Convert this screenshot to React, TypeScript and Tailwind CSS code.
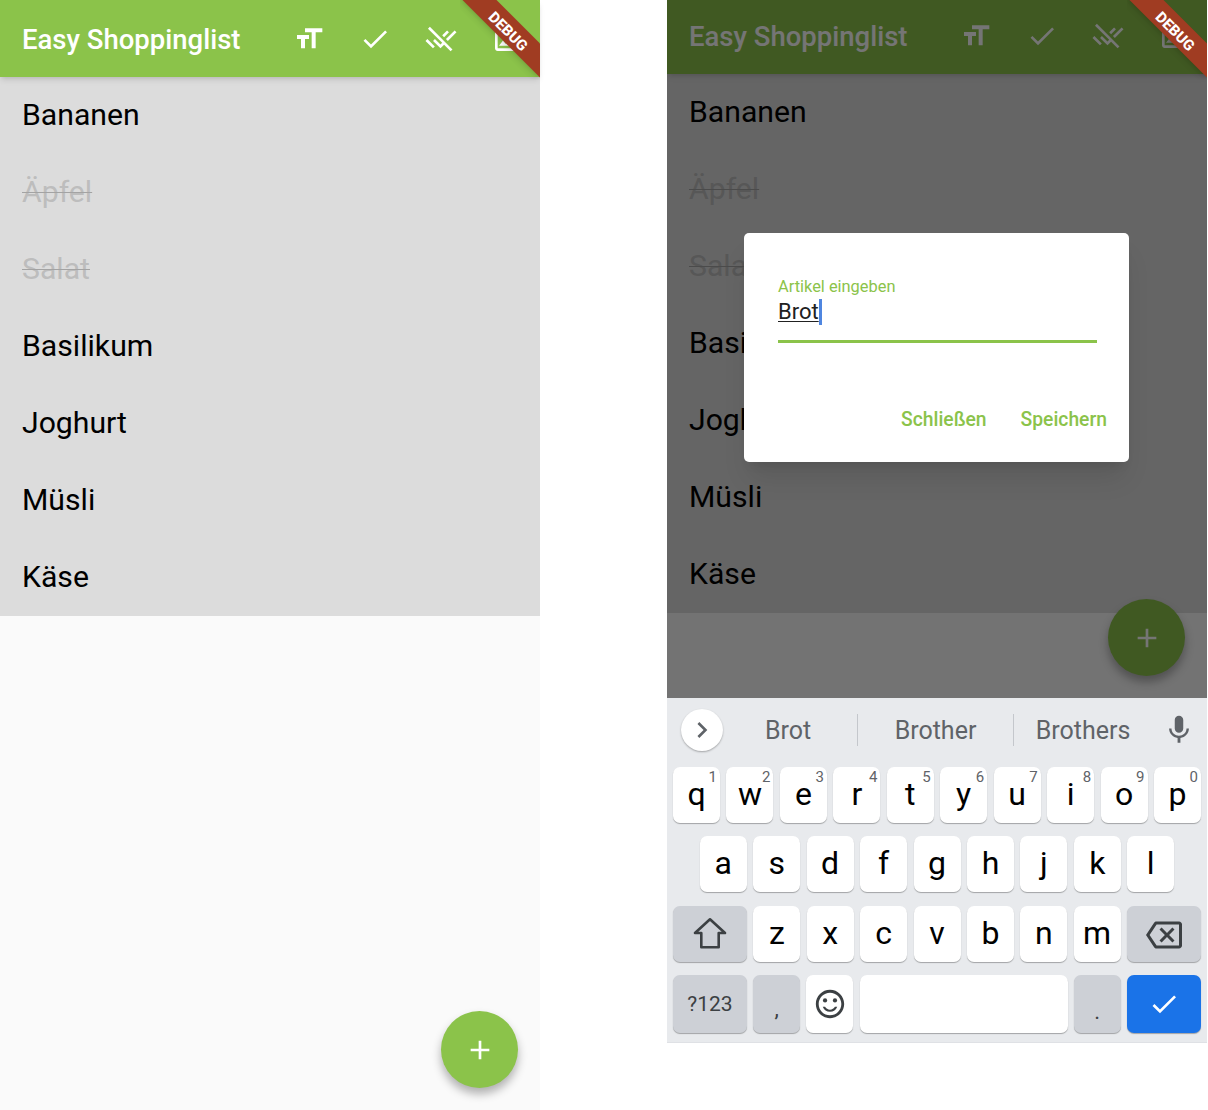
import { MdFormatSize, MdDone, MdRemoveDone, MdAdd, MdKeyboardArrowRight, MdMic, MdCheck, MdOutlineBackspace, MdOutlineSentimentSatisfied, MdOutlineImage } from 'react-icons/md';
import type { ReactNode } from 'react';

const items = [
    { name: 'Bananen', done: false },
    { name: 'Äpfel', done: true },
    { name: 'Salat', done: true },
    { name: 'Basilikum', done: false },
    { name: 'Joghurt', done: false },
    { name: 'Müsli', done: false },
    { name: 'Käse', done: false },
];

const rowOne = [['q', '1'], ['w', '2'], ['e', '3'], ['r', '4'], ['t', '5'], ['y', '6'], ['u', '7'], ['i', '8'], ['o', '9'], ['p', '0']];
const rowTwo = ['a', 's', 'd', 'f', 'g', 'h', 'j', 'k', 'l'];
const rowThree = ['z', 'x', 'c', 'v', 'b', 'n', 'm'];

function DebugBanner() {
    return (
        <div className="absolute z-30 top-0 right-0 w-[80px] h-[80px] overflow-hidden">
            <div className="absolute top-[18px] -right-[25.5px] w-[113px] h-[24px] rotate-45 bg-[#a03c22] shadow-md flex items-center justify-center pt-[5px] text-white text-[15px] leading-none font-extrabold">
                DEBUG
            </div>
        </div>
    );
}

function AppBar({ size }: { size: string }) {
    return (
        <div className={`${size} relative z-10 bg-[#8bc34a] shadow-md text-white flex items-center pl-[22px] shrink-0`}>
            <span className="text-[27.5px] pt-[3px] font-medium w-[271px] whitespace-nowrap">Easy Shoppinglist</span>
            <div className="flex items-center gap-[34px]">
                <MdFormatSize className="w-[32px] h-[32px]" />
                <MdDone className="w-[32px] h-[32px]" />
                <MdRemoveDone className="w-[32px] h-[32px]" />
                <MdOutlineImage className="w-[32px] h-[32px]" />
            </div>
        </div>
    );
}

function ShoppingList() {
    return (
        <div className="bg-[#dcdcdc]">
            {items.map((item) => (
                <div key={item.name} className="h-[77px] flex items-center pl-[22px] pb-[2px] text-[30.2px]">
                    <span className={item.done ? 'line-through decoration-1 decoration-[#a3a3a3] text-[#bdbdbd]' : 'text-black'}>{item.name}</span>
                </div>
            ))}
        </div>
    );
}

function Fab() {
    return (
        <div className="absolute bottom-[22px] right-[22px] w-[77px] h-[77px] rounded-full bg-[#8bc34a] shadow-[0_6px_10px_rgba(0,0,0,0.3)] flex items-center justify-center text-white">
            <MdAdd className="w-[32px] h-[32px]" />
        </div>
    );
}

function Key({ children, sup, width = 'w-[47px]', tone = 'bg-white' }: { children?: ReactNode; sup?: string; width?: string; tone?: string }) {
    return (
        <div className={`${width} ${tone} relative h-full rounded-[7px] shadow-[0_1px_1px_rgba(0,0,0,0.3)] flex items-center justify-center pb-[2px] text-[32px] text-black shrink-0`}>
            {sup && <span className="absolute top-[1px] right-[3px] text-[15px] leading-[18px] text-[#5f6368]">{sup}</span>}
            {children}
        </div>
    );
}

function Keyboard() {
    return (
        <div className="h-[345px] bg-[#e8eaed] border-b border-[#dfe1e5] flex flex-col px-[6px]">
            <div className="h-[62px] mt-[1px] flex items-center text-[25px] text-[#5f6368] shrink-0">
                <div className="w-[42px] h-[42px] ml-[8px] rounded-full bg-white shadow-[0_1px_2px_rgba(0,0,0,0.3)] flex items-center justify-center shrink-0">
                    <MdKeyboardArrowRight className="w-[32px] h-[32px]" />
                </div>
                <div className="w-[130px] mr-[4px] pt-[1px] text-center">Brot</div>
                <div className="w-px h-[32px] bg-[#c4c7cc]" />
                <div className="w-[155px] pt-[1px] text-center">Brother</div>
                <div className="w-px h-[32px] bg-[#c4c7cc]" />
                <div className="w-[138px] pt-[1px] text-center">Brothers</div>
                <MdMic className="w-[34px] h-[34px] ml-[10px]" />
            </div>
            <div className="h-[56px] mt-[6px] flex gap-[6.44px] shrink-0">
                {rowOne.map(([k, n]) => (
                    <Key key={k} sup={n}>{k}</Key>
                ))}
            </div>
            <div className="h-[56px] mt-[13px] flex gap-[6.44px] justify-center shrink-0">
                {rowTwo.map((k) => (
                    <Key key={k}>{k}</Key>
                ))}
            </div>
            <div className="h-[56px] mt-[14px] flex gap-[6.375px] shrink-0">
                <Key width="w-[74px]" tone="bg-[#cdd0d6]">
                    <svg viewBox="0 0 36 36" className="w-[36px] h-[36px] mt-[2px]" fill="none" stroke="#3c4043" strokeWidth="2.6" strokeLinejoin="round">
                        <path d="M18 3.3 33 17h-6.3v14.3H9.300V17H3z" />
                    </svg>
                </Key>
                {rowThree.map((k) => (
                    <Key key={k}>{k}</Key>
                ))}
                <Key width="w-[74px]" tone="bg-[#cdd0d6]">
                    <MdOutlineBackspace className="w-[36px] h-[36px] mt-[4px] text-[#3c4043]" />
                </Key>
            </div>
            <div className="h-[58px] mt-[13px] flex gap-[6.2px] shrink-0">
                <Key width="w-[74px]" tone="bg-[#cdd0d6]">
                    <span className="text-[21px] mt-[4px] text-[#3c4043]">?123</span>
                </Key>
                <Key tone="bg-[#cdd0d6]">
                    <span className="text-[22px] mt-[10px] text-[#3c4043]">,</span>
                </Key>
                <Key>
                    <MdOutlineSentimentSatisfied className="w-[34px] h-[34px] mt-[2px] text-[#3c4043]" />
                </Key>
                <Key width="w-[208px]" />
                <Key tone="bg-[#cdd0d6]">
                    <span className="text-[22px] mt-[16px] text-[#3c4043]">.</span>
                </Key>
                <Key width="w-[74px]" tone="bg-[#1a73e8]">
                    <MdCheck className="w-[32px] h-[32px] mt-[2px] text-white" />
                </Key>
            </div>
        </div>
    );
}

function Dialog() {
    return (
        <div className="w-[385px] h-[229px] mb-[3px] mr-[1px] bg-white rounded-[5px] shadow-xl flex flex-col">
            <div className="pl-[34px] pr-[32px] pt-[44px]">
                <div className="text-[16.4px] leading-[20px] text-[#8bc34a]">Artikel eingeben</div>
                <div className="h-[30px] flex items-center text-[22px] leading-[26px] text-[#212121]">
                    <span className="underline underline-offset-2 decoration-1">Brot</span>
                    <span className="w-[3px] h-[26px] bg-[#4f86e0]" />
                </div>
                <div className="h-[3px] mt-[13px] bg-[#8bc34a]" />
            </div>
            <div className="mt-auto pb-[30px] pr-[22px] flex justify-end gap-[34px] text-[19.3px] leading-[24px] font-medium text-[#8bc34a]">
                <span>Schließen</span>
                <span>Speichern</span>
            </div>
        </div>
    );
}

export default function App() {
    return (
        <div className="w-[1208px] h-[1110px] bg-white flex gap-[127px] font-['Roboto',sans-serif]">
            {/* Shopping list */}
            <div className="relative w-[540px] h-[1110px] bg-[#fafafa] shrink-0">
                <AppBar size="h-[77px]" />
                <ShoppingList />
                <Fab />
                <DebugBanner />
            </div>

            {/* Same list with the add dialog open */}
            <div className="w-[540px] h-[1043px] shrink-0 flex flex-col">
                <div className="relative h-[698px] bg-[#fafafa] overflow-hidden shrink-0">
                    <AppBar size="h-[74px] pb-[3px]" />
                    <ShoppingList />
                    <Fab />
                    <div className="absolute inset-0 z-20 bg-black/54 flex items-center justify-center">
                        <Dialog />
                    </div>
                    <DebugBanner />
                </div>
                <Keyboard />
            </div>
        </div>
    );
}
